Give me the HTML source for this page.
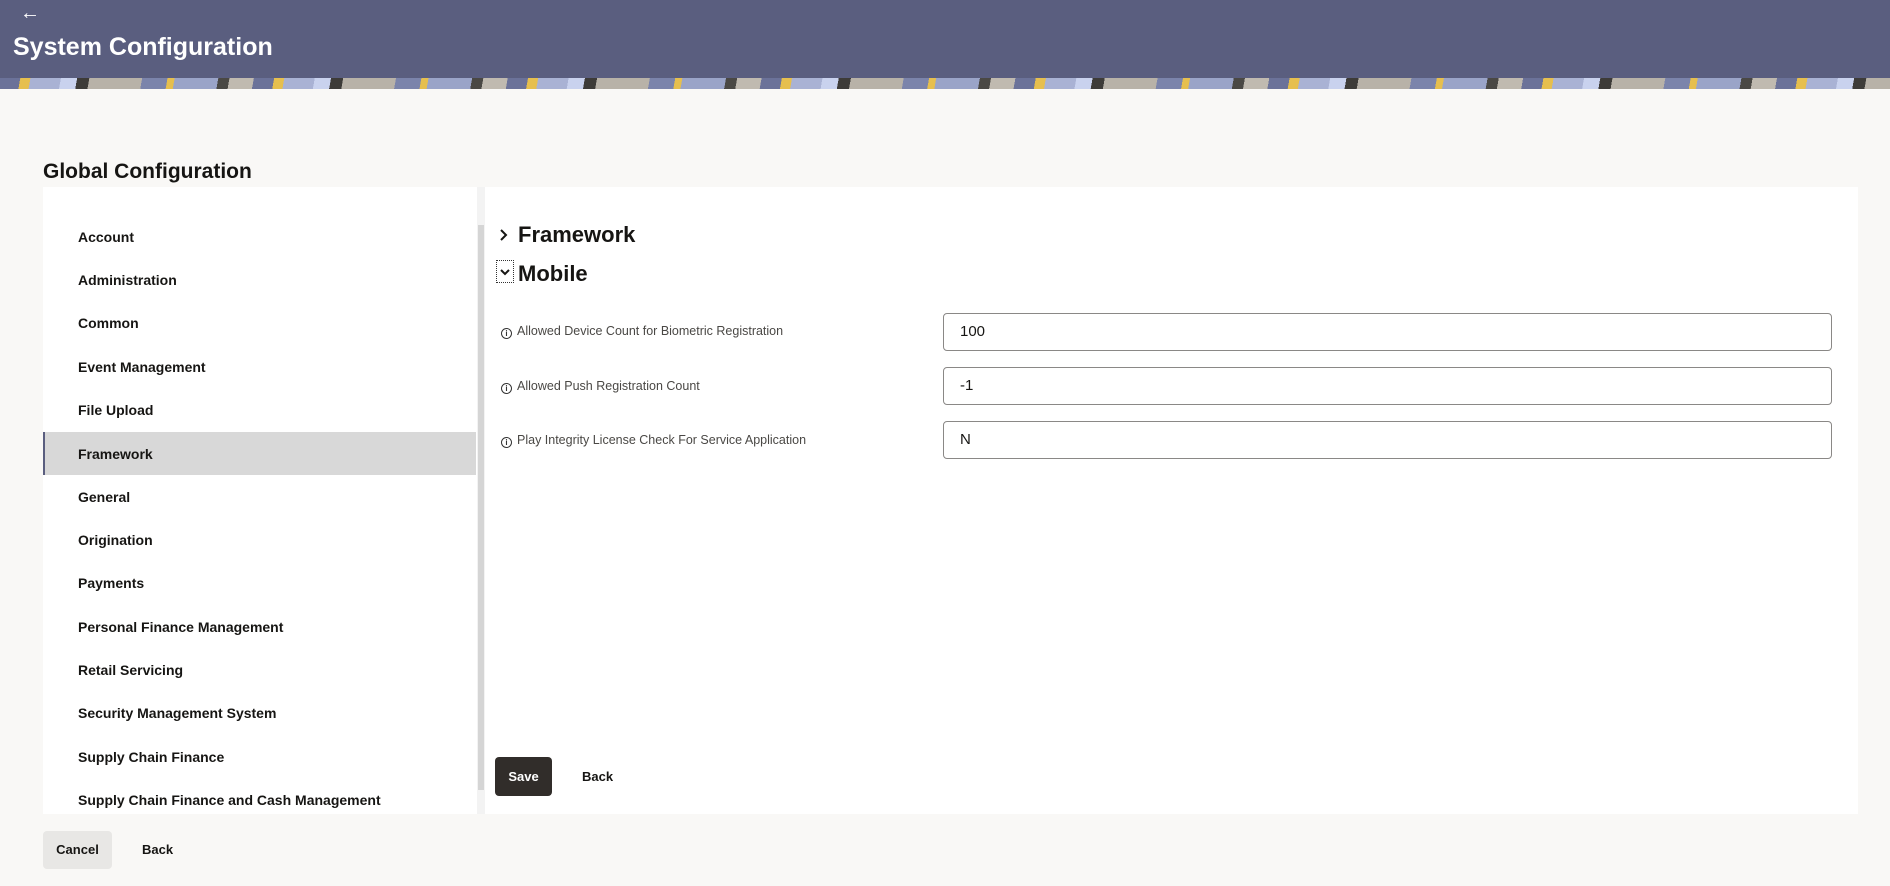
<!DOCTYPE html>
<html><head><meta charset="utf-8"><style>
*{box-sizing:border-box;margin:0;padding:0}
body{width:1890px;height:886px;background:#f9f8f6;font-family:"Liberation Sans",sans-serif;color:#161513;position:relative;overflow:hidden}
.hdr{position:absolute;left:0;top:0;width:1890px;height:78px;background:#5a5e7f}
.pat{position:absolute;left:0;top:78px;width:1890px;height:11px;background:repeating-linear-gradient(100deg,#6b7299 0 20px,#e6bf4e 20px 30px,#a9b2d4 30px 60px,#c9d2ee 60px 76px,#3d3b38 76px 88px,#b8b2a8 88px 140px,#7b84ab 140px 165px,#e6bf4e 165px 172px,#9aa4c8 172px 215px,#4a4844 215px 226px,#c0bab0 226px 250px)}
.arrow{position:absolute;left:20px;top:2px;color:#fff;font-size:20px}
.title{position:absolute;left:13px;top:33px;color:#fff;font-size:25px;font-weight:bold}
h2{position:absolute;left:43px;top:160px;font-size:21px;font-weight:bold}
.panel{position:absolute;left:43px;top:187px;width:1815px;height:627px;background:#fff}
.item{position:absolute;left:0;width:433px;height:43px;font-size:14px;font-weight:bold;padding-left:35px;line-height:45px}
.sel{background:#d8d8d8;border-left:2px solid #5a5e7f;padding-left:33px}
.sb{position:absolute;left:435px;top:38px;width:6px;height:565px;background:#d5d5d5}
.sbt{position:absolute;left:434px;top:0;width:8px;height:627px;background:#f3f3f3}
.sec{position:absolute;font-size:22px;font-weight:bold}
.lbl{position:absolute;left:458px;font-size:12.5px;color:#4a4845}
.ic{display:inline-block;width:11px;height:11px;border:1.3px solid #333;border-radius:50%;font-size:8px;line-height:9px;text-align:center;font-weight:bold;margin-right:5px;vertical-align:-1px;color:#333}
.inp{position:absolute;left:900px;width:889px;height:38px;border:1px solid #8a8886;border-radius:4px;font-size:15px;padding-left:16px;line-height:36px}
.btn{position:absolute;font-size:13px;font-weight:bold;text-align:center}
</style></head><body>
<div class="hdr"></div><div class="pat"></div>
<div class="arrow">←</div>
<div class="title">System Configuration</div>
<h2>Global Configuration</h2>
<div class="panel">
<div class="item" style="top:28px">Account</div>
<div class="item" style="top:71px">Administration</div>
<div class="item" style="top:114px">Common</div>
<div class="item" style="top:158px">Event Management</div>
<div class="item" style="top:201px">File Upload</div>
<div class="item sel" style="top:245px">Framework</div>
<div class="item" style="top:288px">General</div>
<div class="item" style="top:331px">Origination</div>
<div class="item" style="top:374px">Payments</div>
<div class="item" style="top:418px">Personal Finance Management</div>
<div class="item" style="top:461px">Retail Servicing</div>
<div class="item" style="top:504px">Security Management System</div>
<div class="item" style="top:548px">Supply Chain Finance</div>
<div class="item" style="top:591px">Supply Chain Finance and Cash Management</div>
<div class="sbt"></div><div class="sb"></div>
<svg style="position:absolute;left:455px;top:41px" width="12" height="14"><path d="M3 2l5 5-5 5" stroke="#161513" stroke-width="2" fill="none"/></svg>
<div class="sec" style="left:475px;top:35px">Framework</div>
<div style="position:absolute;left:453px;top:73px;width:18px;height:23px;border:1px dotted #333"></div>
<svg style="position:absolute;left:456px;top:80px" width="12" height="10"><path d="M2 3l4 4 4-4" stroke="#161513" stroke-width="2" fill="none"/></svg>
<div class="sec" style="left:475px;top:74px">Mobile</div>
<div class="lbl" style="top:137px"><span class="ic">i</span>Allowed Device Count for Biometric Registration</div>
<div class="lbl" style="top:192px"><span class="ic">i</span>Allowed Push Registration Count</div>
<div class="lbl" style="top:246px"><span class="ic">i</span>Play Integrity License Check For Service Application</div>
<div class="inp" style="top:126px">100</div>
<div class="inp" style="top:180px">-1</div>
<div class="inp" style="top:234px">N</div>
<div class="btn" style="left:452px;top:570px;width:57px;height:39px;background:#312d2a;color:#fff;border-radius:4px;line-height:39px">Save</div>
<div class="btn" style="left:539px;top:570px;line-height:39px">Back</div>
</div>
<div class="btn" style="left:43px;top:831px;width:69px;height:38px;background:#e8e7e5;border-radius:4px;line-height:38px">Cancel</div>
<div class="btn" style="left:142px;top:831px;line-height:38px">Back</div>
</body></html>
